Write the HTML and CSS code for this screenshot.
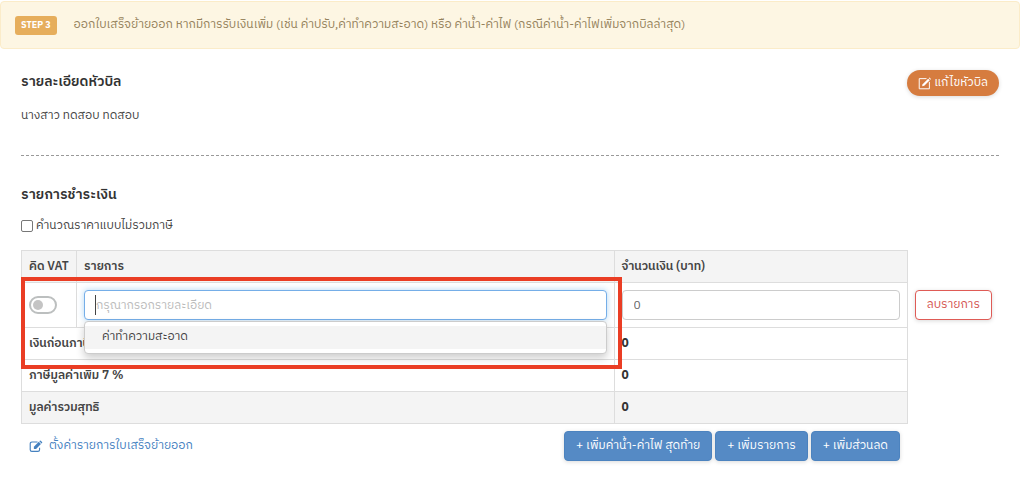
FILE: index.html
```html
<!DOCTYPE html>
<html lang="th">
<head>
<meta charset="utf-8">
<meta name="viewport" content="width=device-width, initial-scale=1">
<title>ออกใบเสร็จย้ายออก</title>
<link rel="stylesheet" href="styles.css">
</head>
<body>
<div class="step-alert">
  <span class="step-badge">STEP 3</span>
  <span class="step-text">ออกใบเสร็จย้ายออก หากมีการรับเงินเพิ่ม (เช่น ค่าปรับ,ค่าทำความสะอาด) หรือ ค่าน้ำ-ค่าไฟ (กรณีค่าน้ำ-ค่าไฟเพิ่มจากบิลล่าสุด)</span>
</div>
<main class="content">
  <section class="bill-head">
    <div class="bill-info">
      <h2 class="title">รายละเอียดหัวบิล</h2>
      <p class="name">นางสาว ทดสอบ ทดสอบ</p>
    </div>
    <button type="button" class="edit-button">
      <svg class="icon" viewBox="0 0 16 16" fill="none" stroke="currentColor" stroke-width="1.2" aria-hidden="true"><path d="M10.5 2H1.500v12.500h12.500V6"/><path d="M5 11.500l.7-2.700 6.800-6.800 2 2-6.800 6.800z" fill="currentColor" stroke="none"/><path d="M13.200 1.300l.8-.8 2 2-.8.800z" fill="currentColor" stroke="none"/></svg>
      <span>แก้ไขหัวบิล</span>
    </button>
  </section>
  <section class="payments">
    <h2 class="title">รายการชำระเงิน</h2>
    <div class="tax-option">
      <input type="checkbox" id="no-tax" class="check">
      <label for="no-tax">คำนวณราคาแบบไม่รวมภาษี</label>
    </div>
    <div class="table-wrap">
      <table class="items">
        <colgroup><col class="col-vat"><col><col class="col-amount"><col class="col-action"></colgroup>
        <thead>
          <tr><th scope="col">คิด VAT</th><th scope="col">รายการ</th><th scope="col">จำนวนเงิน (บาท)</th><td class="action"></td></tr>
        </thead>
        <tbody>
          <tr class="entry">
            <td><input type="checkbox" class="toggle" aria-label="คิด VAT"></td>
            <td>
              <div class="combo">
                <input type="text" class="field focused" placeholder="กรุณากรอกรายละเอียด" aria-label="รายการ">
                <span class="caret"></span>
                <ul class="menu"><li class="menu-item">ค่าทำความสะอาด</li></ul>
              </div>
            </td>
            <td><input type="text" class="field" value="0" aria-label="จำนวนเงิน (บาท)"></td>
            <td class="action"><button type="button" class="delete-button">ลบรายการ</button></td>
          </tr>
          <tr><th scope="row" colspan="2">เงินก่อนภาษี</th><td class="sum">0</td><td class="action"></td></tr>
          <tr><th scope="row" colspan="2">ภาษีมูลค่าเพิ่ม 7 %</th><td class="sum">0</td><td class="action"></td></tr>
          <tr class="total"><th scope="row" colspan="2">มูลค่ารวมสุทธิ</th><td class="sum">0</td><td class="action"></td></tr>
        </tbody>
      </table>
      <div class="highlight"></div>
    </div>
    <div class="footer">
      <a href="#" class="settings-link">
        <svg class="icon" viewBox="0 0 16 16" fill="none" stroke="currentColor" stroke-width="1.400" aria-hidden="true"><path d="M10.500 2.500H3.500a2 2 0 0 0-2 2v7.500a2 2 0 0 0 2 2H11a2 2 0 0 0 2-2V9.500"/><path d="M6 11V8.300l6-6 2.700 2.700-6 6z" fill="currentColor" stroke="none"/><path d="M12.700 1.600l.7-.7q.5-.4 1 0l1.700 1.700q.4.500 0 1l-.7.700z" fill="currentColor" stroke="none"/></svg>
        <span>ตั้งค่ารายการใบเสร็จย้ายออก</span>
      </a>
      <div class="buttons">
        <button type="button" class="add-button">+ เพิ่มค่าน้ำ-ค่าไฟ สุดท้าย</button>
        <button type="button" class="add-button">+ เพิ่มรายการ</button>
        <button type="button" class="add-button">+ เพิ่มส่วนลด</button>
      </div>
    </div>
  </section>
</main>
</body>
</html>
```
FILE: styles.css
```css
*, *::before { box-sizing: border-box; }
body {
  margin: 0;
  background: #fff;
  color: #444;
  font: 12px/20px "IBM Plex Sans Thai", "Noto Sans Thai", "Noto Sans", sans-serif;
}
button, input { font: inherit; color: inherit; }
button { cursor: pointer; white-space: nowrap; }
.step-alert {
  display: flex;
  align-items: center;
  gap: 17px;
  min-height: 48px;
  margin: 1px 4px 0 0;
  padding: 0 14px;
  border: 1px solid #fbecc9;
  border-radius: 4px;
  background: #fdf6e3;
  color: #94815a;
}
.step-badge {
  padding: 0 6px;
  border-radius: 3px;
  background: #e6ae5c;
  color: #fff;
  font-size: 9px;
  font-weight: 700;
  line-height: 19px;
  white-space: nowrap;
}
.content { padding: 21px 25px 0 21px; }
.bill-head {
  display: flex;
  justify-content: space-between;
  align-items: flex-start;
  padding-bottom: 29px;
  border-bottom: 1px dashed #999;
}
.title {
  margin: 0;
  color: #333;
  font-size: 14px;
  font-weight: 600;
  line-height: 24px;
}
.name { margin: 12px 0 0; }
.icon { width: 13px; height: 13px; flex: none; overflow: visible; }
.edit-button {
  display: flex;
  align-items: center;
  gap: 3px;
  height: 26px;
  padding: 0 11px;
  border: 0;
  border-radius: 13px;
  background: #d67c3f;
  color: #fff;
  box-shadow: 0 1px 4px rgba(0, 0, 0, 0.15);
}
.payments { padding-top: 27px; }
.tax-option {
  display: flex;
  align-items: center;
  gap: 3px;
  margin: 9px 0 14px;
}
.check {
  appearance: none;
  width: 12px;
  height: 12px;
  margin: 0;
  border: 1px solid #777;
  border-radius: 2px;
}
.table-wrap { position: relative; }
.items {
  width: 100%;
  table-layout: fixed;
  border-collapse: collapse;
}
.col-vat { width: 55px; }
.col-amount { width: 293px; }
.col-action { width: 92px; }
.items th, .items td {
  height: 32px;
  padding: 0 7px;
  border: 1px solid #ddd;
  font-weight: 600;
  text-align: left;
  white-space: nowrap;
}
.items thead th, .total th, .total .sum { background: #f4f4f4; }
.items .sum { color: #333; font-weight: 700; }
.items .entry td { height: 45px; font-weight: 400; }
.items td.action { border-width: 0 0 0 1px; background: none; }
.toggle {
  appearance: none;
  display: block;
  width: 28px;
  height: 18px;
  margin: 0;
  padding: 2px;
  border: 2px solid #bcbfbf;
  border-radius: 9px;
}
.toggle::before {
  content: "";
  display: block;
  width: 10px;
  height: 10px;
  border-radius: 5px;
  background: #c4c4c4;
}
.combo { position: relative; }
.field {
  display: block;
  width: 100%;
  height: 30px;
  padding: 0 11px;
  border: 1px solid #ccc;
  border-radius: 4px;
  background: #fff;
  color: #666;
}
.field::placeholder { color: #bbb; opacity: 1; }
.focused {
  border-color: #75aee8;
  box-shadow: 0 0 6px rgba(102, 175, 233, 0.5);
}
.caret {
  position: absolute;
  top: 5px;
  left: 11px;
  width: 1px;
  height: 20px;
  background: #444;
}
.menu {
  position: absolute;
  z-index: 1;
  top: 31px;
  left: 0;
  right: 0;
  margin: 0;
  padding: 4px 0;
  border: 1px solid #ccc;
  border-radius: 4px;
  background: #fff;
  box-shadow: 0 4px 9px rgba(0, 0, 0, 0.2);
  list-style: none;
}
.menu-item { padding: 1px 17px 2px; background: #f4f4f4; }
.delete-button {
  display: block;
  width: 100%;
  height: 30px;
  padding: 0;
  border: 1px solid #df5b56;
  border-radius: 4px;
  background: #fff;
  color: #d4544f;
  box-shadow: 0 1px 4px rgba(0, 0, 0, 0.15);
}
.highlight {
  position: absolute;
  z-index: 2;
  top: 27px;
  left: 0;
  right: 377px;
  height: 92px;
  border: 4px solid #ea3d24;
  pointer-events: none;
}
.footer {
  display: flex;
  justify-content: space-between;
  align-items: center;
  padding: 7px 99px 20px 8px;
}
.settings-link {
  display: flex;
  align-items: center;
  gap: 7px;
  color: #4581bf;
  text-decoration: none;
}
.buttons { display: flex; gap: 3px; }
.add-button {
  height: 30px;
  padding: 0 11px;
  border: 1px solid #4c83bf;
  border-radius: 4px;
  background: #558ac5;
  color: #fff;
  box-shadow: 0 1px 4px rgba(0, 0, 0, 0.15);
}
```
